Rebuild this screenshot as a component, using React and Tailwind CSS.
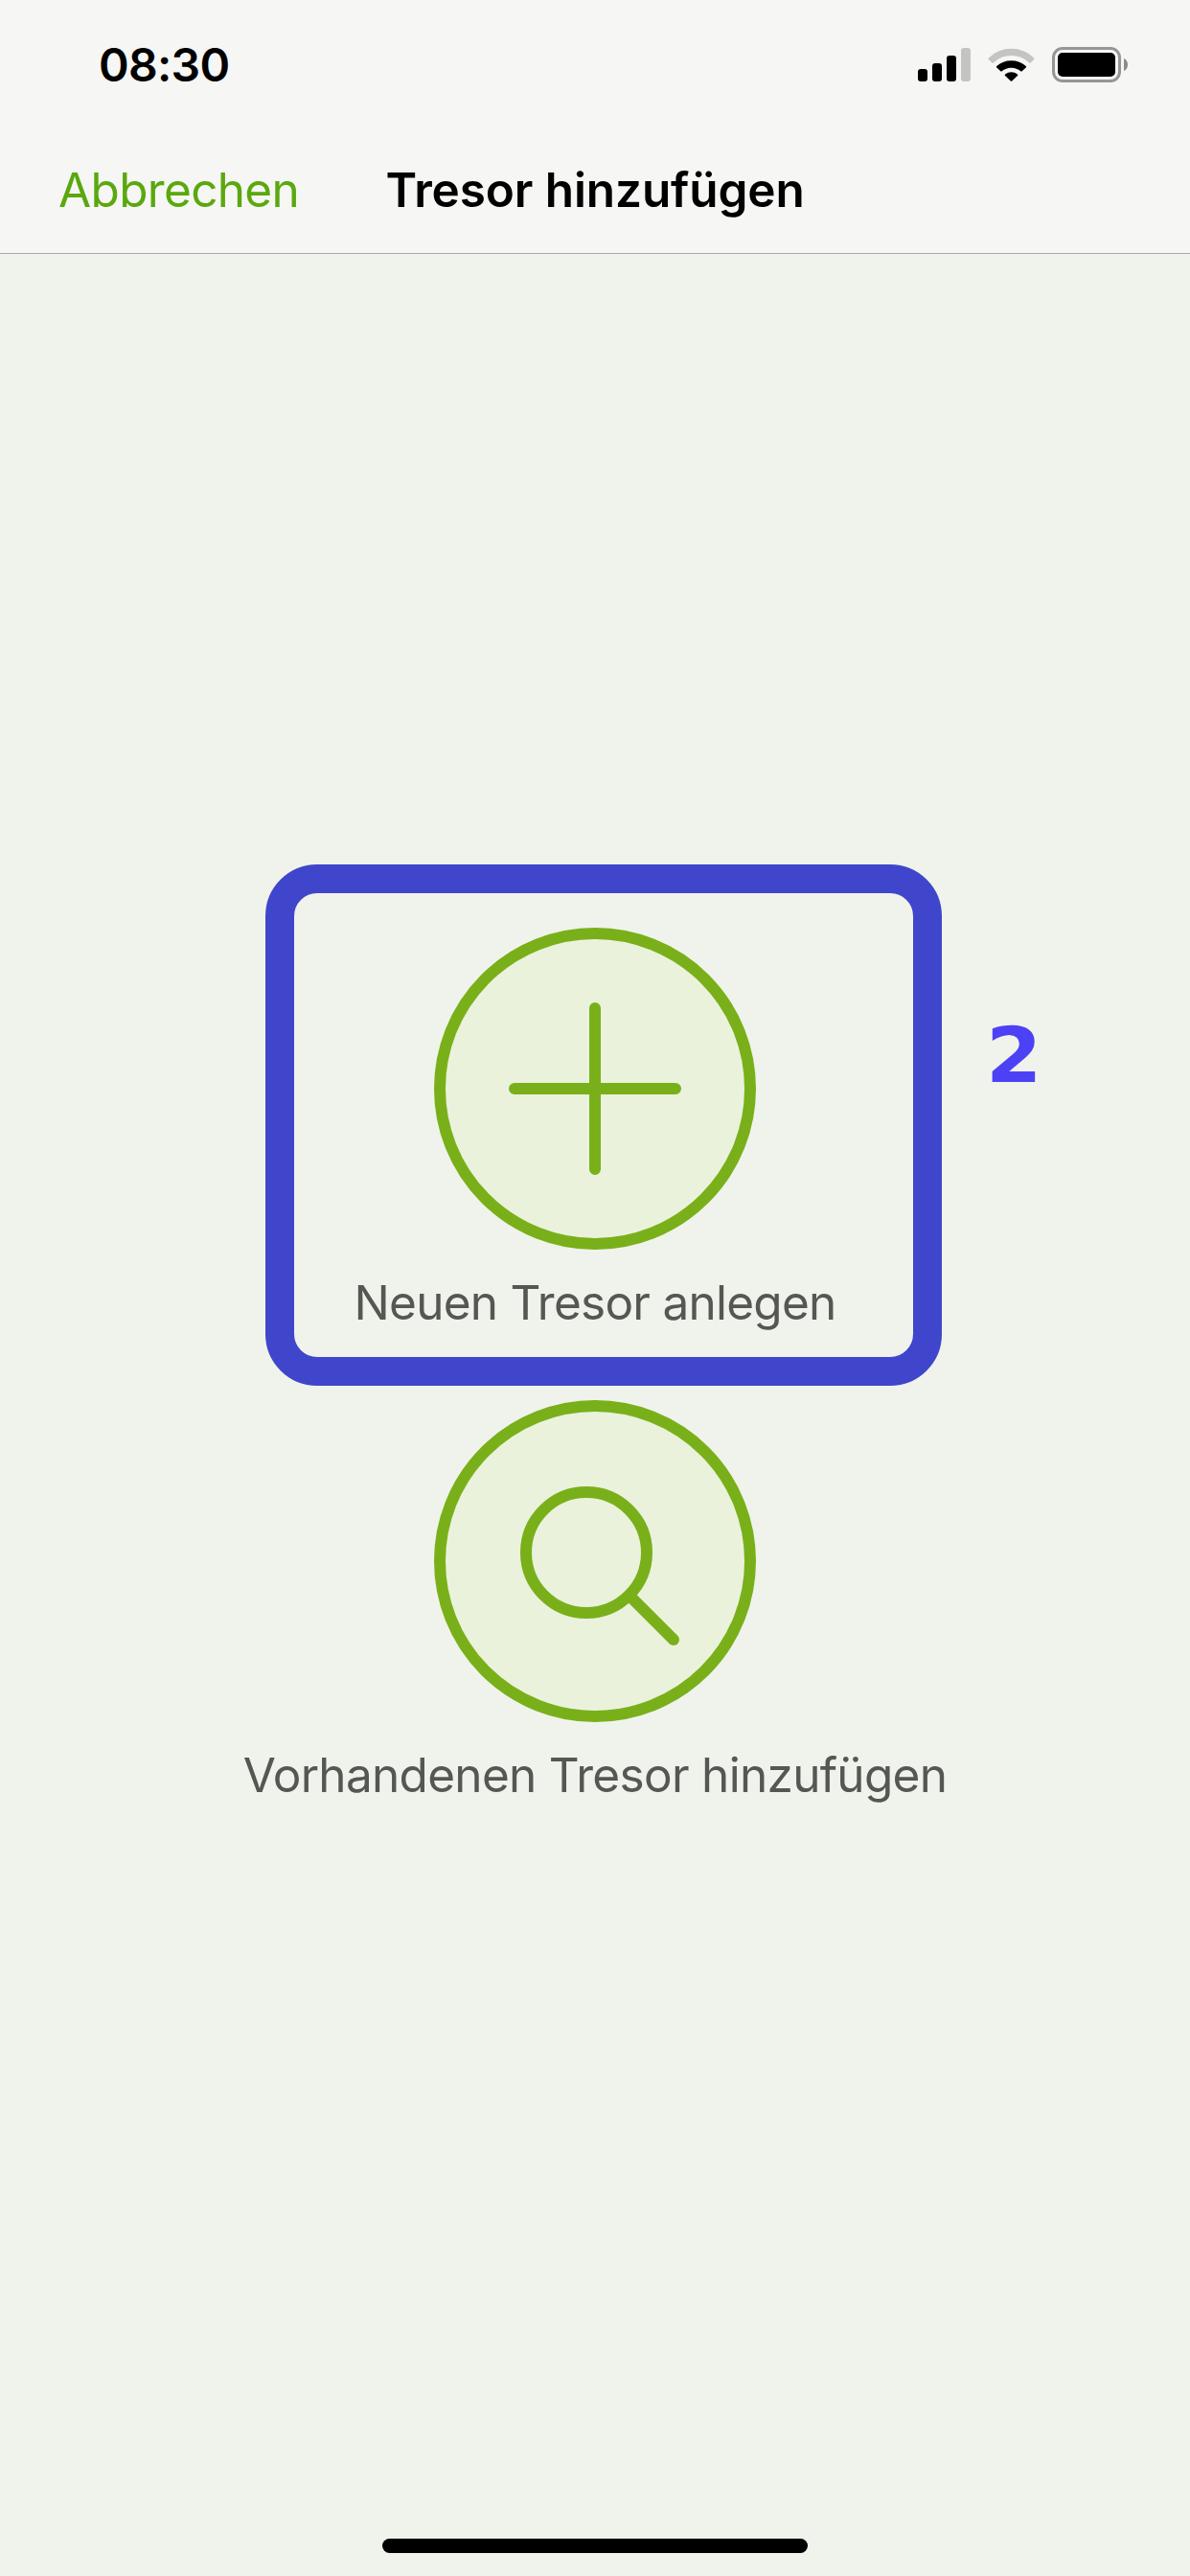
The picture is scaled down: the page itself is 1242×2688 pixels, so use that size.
import React from "react";

function SignalIcon() {
  return (
    <svg width="55" height="37" viewBox="0 0 55 37" className="block">
      <rect x="0" y="23" width="10" height="13" rx="3" fill="#000" />
      <rect x="15" y="17" width="10" height="19" rx="3" fill="#000" />
      <rect x="30" y="9" width="10" height="27" rx="3" fill="#000" />
      <rect x="45" y="1" width="10" height="35" rx="3" fill="#c4c5c3" />
    </svg>
  );
}

function WifiIcon() {
  return (
    <svg width="49" height="37" viewBox="0 0 49 37" className="block">
      <path
        d="M1.2 12.6A33.6 33.6 0 0 1 47.8 12.6L44.2 16A29 29 0 0 0 4.8 16Z"
        transform="translate(0.4 -0.3) scale(0.984 1)"
        fill="#c4c5c3"
        stroke="#c4c5c3"
        strokeWidth="2.2"
        strokeLinejoin="round"
      />
      <path
        d="M9.9 20.8A21.7 21.7 0 0 1 39.1 20.8L35 24.6A16.4 16.4 0 0 0 14 24.6Z"
        fill="#000"
        stroke="#000"
        strokeWidth="2"
        strokeLinejoin="round"
      />
      <path
        d="M18.7 29.3A9.3 9.3 0 0 1 30.3 29.3L24.5 34.8Z"
        fill="#000"
        stroke="#000"
        strokeWidth="2"
        strokeLinejoin="round"
      />
    </svg>
  );
}

function BatteryIcon() {
  return (
    <svg width="79" height="37" viewBox="0 0 79 37" className="block">
      <rect x="1.5" y="1.5" width="69" height="34" rx="9.5" fill="none" stroke="#969795" strokeWidth="3" />
      <rect x="6" y="6" width="60" height="25" rx="5" fill="#000" />
      <path d="M75 12C77.6 13 79 15.6 79 18.5C79 21.4 77.6 24 75 25Z" fill="#8b8c8a" />
    </svg>
  );
}

function PlusIcon() {
  return (
    <svg width="336" height="336" viewBox="0 0 336 336" className="block">
      <circle cx="168" cy="168" r="162" fill="#eaf2dc" stroke="#79b01a" strokeWidth="12" />
      <path d="M168 84V252M84 168H252" stroke="#79b01a" strokeWidth="12" strokeLinecap="round" />
    </svg>
  );
}

function SearchIcon() {
  return (
    <svg width="336" height="336" viewBox="0 0 336 336" className="block">
      <circle cx="168" cy="168" r="162" fill="#eaf2dc" stroke="#79b01a" strokeWidth="12" />
      <circle cx="159" cy="159" r="63" fill="none" stroke="#79b01a" strokeWidth="12" />
      <path d="M204.5 204.5L250 250" stroke="#79b01a" strokeWidth="12" strokeLinecap="round" />
    </svg>
  );
}

export default function App() {
  return (
    <div className="flex h-[2688px] w-[1242px] flex-col overflow-hidden bg-[#f0f3eb] font-['Inter',sans-serif]">
      <header className="flex h-[265px] shrink-0 flex-col border-b border-[#a8aaa6] bg-[#f6f6f4]">
        <div className="flex h-[132px] items-start justify-between pl-[103px] pr-[65px]">
          <span className="mt-[38px] text-[48px] leading-[60px] font-semibold tracking-[-0.7px] text-black">08:30</span>
          <div className="mt-[49px] flex gap-[18px]">
            <SignalIcon />
            <WifiIcon />
            <BatteryIcon />
          </div>
        </div>
        <nav className="grid h-[132px] grid-cols-[1fr_auto_1fr] items-center text-[49.5px] leading-[60px] whitespace-nowrap">
          <button className="justify-self-start pl-[61px] tracking-[-0.66px] text-[#5aa80e]">Abbrechen</button>
          <h1 className="font-semibold tracking-[-0.11px] text-black">Tresor hinzufügen</h1>
          <span />
        </nav>
      </header>

      <main className="flex flex-1 flex-col items-center gap-[72px] pt-[703px] text-[49.5px] leading-[60px] whitespace-nowrap text-[#555753]">
        <div className="relative flex flex-col items-center gap-[25px]">
          <PlusIcon />
          <span className="tracking-[-0.75px]">Neuen Tresor anlegen</span>
          <div className="absolute -top-[66px] left-1/2 -ml-[344px] h-[544px] w-[706px] rounded-[54px] border-[30px] border-[#3f46cb]" />
          <span className="absolute top-[94px] left-1/2 ml-[408px] origin-left scale-x-[1.05] font-['DejaVu_Sans',sans-serif] text-[80px] leading-[80px] font-bold text-[#4d41f6]">
            2
          </span>
        </div>
        <div className="flex flex-col items-center gap-[25px]">
          <SearchIcon />
          <span className="tracking-[-0.7px]">Vorhandenen Tresor hinzufügen</span>
        </div>
      </main>

      <footer className="flex shrink-0 justify-center pb-[24px]">
        <div className="h-[15px] w-[444px] rounded-full bg-black" />
      </footer>
    </div>
  );
}
